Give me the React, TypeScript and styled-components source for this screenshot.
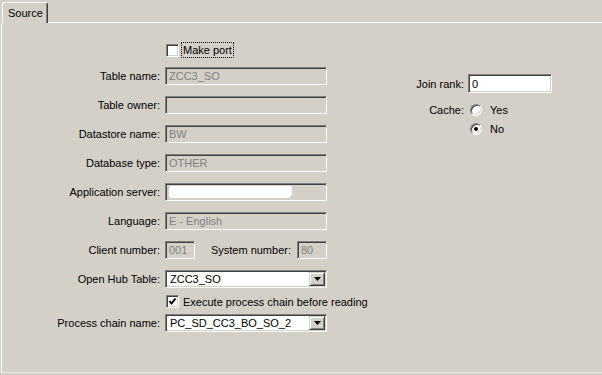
import React from 'react'
import styled, { createGlobalStyle } from 'styled-components'

const face = '#d4d0c8'
const shadow = '#808080'
const darkShadow = '#404040'

const GlobalStyle = createGlobalStyle`
  html, body {
    margin: 0;
    padding: 0;
    background: ${face};
  }
  body {
    font-family: "Liberation Sans", Arial, sans-serif;
    font-size: 11px;
    color: #000;
  }
`

const Window = styled.div`
  width: 602px;
  height: 375px;
  box-sizing: border-box;
  padding-left: 1px;
  display: flex;
  flex-direction: column;
  overflow: hidden;
  background: ${face};
`

const TabStrip = styled.div`
  display: flex;
  height: 23px;
  box-sizing: border-box;
  padding: 2px 0 0 1px;
`

const Tab = styled.div`
  width: 46px;
  box-sizing: border-box;
  display: flex;
  align-items: center;
  padding: 0 5px;
  border-left: 1px solid #fff;
  border-top: 1px solid #fff;
  border-right: 1px solid ${darkShadow};
  box-shadow: inset -1px 0 ${shadow};
  border-radius: 3px 3px 0 0;
`

const TabFiller = styled.div`
  flex: 1;
  border-bottom: 1px solid #fff;
`

const Panel = styled.div`
  flex: 1;
  display: flex;
  align-items: flex-start;
  border-left: 1px solid #fff;
  border-bottom: 1px solid #e9e7e1;
  margin-bottom: 2px;
`

const LeftForm = styled.div`
  width: 325px;
  display: flex;
  flex-direction: column;
  padding-top: 19px;
`

const RightForm = styled.div`
  display: flex;
  flex-direction: column;
  padding-top: 51px;
  margin-left: 77px;
`

const Row = styled.div<{ $mt?: number; $gap?: number; $h?: number }>`
  display: flex;
  align-items: center;
  gap: ${p => p.$gap ?? 5}px;
  margin-top: ${p => p.$mt ?? 0}px;
  height: ${p => (p.$h ? `${p.$h}px` : 'auto')};
`

const Label = styled.span<{ $w?: number }>`
  width: ${p => p.$w ?? 158}px;
  flex-shrink: 0;
  text-align: right;
  white-space: nowrap;
`

const FieldGroup = styled.div`
  width: 162px;
  display: flex;
  align-items: center;
  gap: 6px;
`

const InlineLabel = styled.span`
  flex: 1;
  text-align: right;
  white-space: nowrap;
`

const Field = styled.div<{ $w?: number; $h?: number; $disabled?: boolean }>`
  width: ${p => p.$w ?? 162}px;
  height: ${p => p.$h ?? 18}px;
  box-sizing: border-box;
  flex-shrink: 0;
  display: flex;
  align-items: center;
  padding: 0 3px;
  border: 1px solid;
  border-color: ${shadow} #fff #fff ${shadow};
  box-shadow: inset 1px 1px ${darkShadow}, inset -1px -1px ${face};
  background: ${p => (p.$disabled ? face : '#fff')};
  color: ${p => (p.$disabled ? shadow : '#000')};
  white-space: nowrap;
  overflow: hidden;
`

const Redacted = styled.span`
  width: 123px;
  height: 12px;
  background: #fff;
  border-radius: 4px 2px 5px 3px;
`

const Select = styled.div`
  width: 162px;
  height: 18px;
  box-sizing: border-box;
  display: flex;
  align-items: center;
  padding: 1px 1px 1px 4px;
  border: 1px solid;
  border-color: ${shadow} #fff #fff ${shadow};
  box-shadow: inset 1px 1px ${darkShadow}, inset -1px -1px ${face};
  background: #fff;
`

const SelectValue = styled.span`
  flex: 1;
  white-space: nowrap;
`

const DropButton = styled.span`
  width: 16px;
  height: 14px;
  box-sizing: border-box;
  display: flex;
  align-items: center;
  justify-content: center;
  background: ${face};
  border: 1px solid;
  border-color: ${face} ${darkShadow} ${darkShadow} ${face};
  box-shadow: inset 1px 1px #fff, inset -1px -1px ${shadow};
`

const CheckBox = styled.span`
  width: 13px;
  height: 13px;
  box-sizing: border-box;
  flex-shrink: 0;
  display: flex;
  align-items: center;
  justify-content: center;
  background: #fff;
  border: 1px solid;
  border-color: ${shadow} #fff #fff ${shadow};
  box-shadow: inset 1px 1px ${darkShadow}, inset -1px -1px ${face};
`

const CheckLabel = styled.span<{ $focused?: boolean }>`
  margin-left: 2px;
  padding: 0 1px;
  line-height: 14px;
  border: 1px dotted ${p => (p.$focused ? '#000' : 'transparent')};
  white-space: nowrap;
`

const Radio = styled.span`
  width: 12px;
  height: 12px;
  box-sizing: border-box;
  margin-left: 2px;
  border-radius: 50%;
  display: flex;
  align-items: center;
  justify-content: center;
  background: #fff;
  border: 1px solid;
  border-color: ${shadow} #fff #fff ${shadow};
  box-shadow: inset 1px 1px ${darkShadow}, inset -1px -1px ${face};
`

const RadioDot = styled.span`
  width: 4px;
  height: 4px;
  border-radius: 50%;
  background: #000;
`

const RadioLabel = styled.span`
  margin-left: 4px;
`

const Spacer = styled.span<{ $w: number }>`
  width: ${p => p.$w}px;
  flex-shrink: 0;
`

const Arrow = () => (
  <svg width="7" height="4" viewBox="0 0 7 4">
    <polygon points="0,0 7,0 3.5,4" fill="#000" />
  </svg>
)

const Tick = () => (
  <svg width="9" height="9" viewBox="0 0 9 9">
    <polyline points="1.5,4 3.5,6.5 7.5,1.5" fill="none" stroke="#000" strokeWidth="2" />
  </svg>
)

const fields = [
  { label: 'Table name:', value: 'ZCC3_SO' },
  { label: 'Table owner:', value: '' },
  { label: 'Datastore name:', value: 'BW' },
  { label: 'Database type:', value: 'OTHER' },
  { label: 'Application server:', value: null },
  { label: 'Language:', value: 'E - English' },
]

export default function App() {
  return (
    <>
      <GlobalStyle />
      <Window>
        <TabStrip>
          <Tab>Source</Tab>
          <TabFiller />
        </TabStrip>
        <Panel>
          <LeftForm>
            <Row $h={16} $gap={0}>
              <Spacer $w={164} />
              <CheckBox />
              <CheckLabel $focused>Make port</CheckLabel>
            </Row>
            {fields.map((f, i) => (
              <Row key={f.label} $mt={i === 0 ? 9 : 11}>
                <Label>{f.label}</Label>
                <Field $disabled>{f.value === null ? <Redacted /> : f.value}</Field>
              </Row>
            ))}
            <Row $mt={11}>
              <Label>Client number:</Label>
              <FieldGroup>
                <Field $disabled $w={30}>001</Field>
                <InlineLabel>System number:</InlineLabel>
                <Field $disabled $w={30}>80</Field>
              </FieldGroup>
            </Row>
            <Row $mt={11}>
              <Label>Open Hub Table:</Label>
              <Select>
                <SelectValue>ZCC3_SO</SelectValue>
                <DropButton><Arrow /></DropButton>
              </Select>
            </Row>
            <Row $mt={7} $gap={0} $h={13}>
              <Spacer $w={164} />
              <CheckBox><Tick /></CheckBox>
              <CheckLabel>Execute process chain before reading</CheckLabel>
            </Row>
            <Row $mt={6}>
              <Label>Process chain name:</Label>
              <Select>
                <SelectValue>PC_SD_CC3_BO_SO_2</SelectValue>
                <DropButton><Arrow /></DropButton>
              </Select>
            </Row>
          </LeftForm>
          <RightForm>
            <Row $gap={4}>
              <Label $w={60}>Join rank:</Label>
              <Field $w={84} $h={19}>0</Field>
            </Row>
            <Row $gap={4} $mt={10} $h={13}>
              <Label $w={60}>Cache:</Label>
              <Radio />
              <RadioLabel>Yes</RadioLabel>
            </Row>
            <Row $gap={4} $mt={6} $h={13}>
              <Label $w={60} />
              <Radio><RadioDot /></Radio>
              <RadioLabel>No</RadioLabel>
            </Row>
          </RightForm>
        </Panel>
      </Window>
    </>
  )
}
